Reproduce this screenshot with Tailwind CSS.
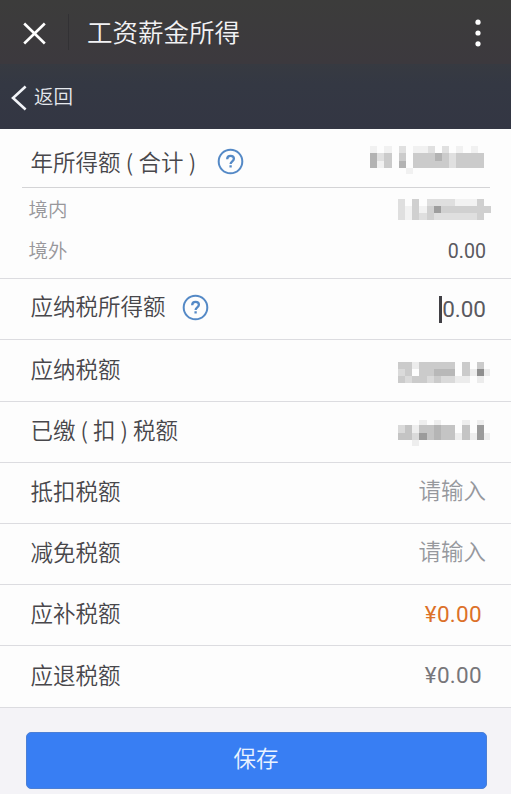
<!DOCTYPE html>
<html lang="zh-CN">
<head>
<meta charset="utf-8">
<title>工资薪金所得</title>
<script src="https://cdn.jsdelivr.net/npm/@tailwindcss/browser@4"></script>
</head>
<body class="w-[511px] h-[794px] overflow-hidden bg-[#f4f3f7] font-[Roboto,'Noto_Sans_CJK_SC',sans-serif] text-[#48474b]">
<header class="h-16 flex items-center bg-linear-to-b from-[#3c3c3b] to-[#3c393e] text-[#f2f2f4]">
  <svg class="ml-[23px] mt-[2px] size-[23px]" viewBox="0 0 23 23" fill="none" stroke="#fff" stroke-width="2.6"><path d="M1.2 1.5 21.8 21.5M21.8 1.5 1.2 21.5"/></svg>
  <div class="ml-[22px] w-px h-9 bg-[#323134]"></div>
  <h1 class="ml-[18px] -mt-[2px] text-[25.5px] leading-8 font-['Noto_Sans_CJK_SC',sans-serif] font-[350]">工资薪金所得</h1>
  <svg class="ml-auto mr-[30px] mt-[2px] w-[6px] h-7" viewBox="0 0 6 28" fill="#fff"><circle cx="3" cy="3.2" r="2.6"/><circle cx="3" cy="14" r="2.6"/><circle cx="3" cy="24.8" r="2.6"/></svg>
</header>
<nav class="h-[65px] flex items-center bg-linear-to-b from-[#373a41] via-[#343843] via-30% to-[#333643] text-[#e6e9ee]">
  <svg class="ml-[11px] mt-[2px] w-4 h-[26px]" viewBox="0 0 16 26" fill="none" stroke="#f2f4f8" stroke-width="2.6"><path d="M14.6 1.5 2 13 14.6 24.5"/></svg>
  <span class="ml-[7px] mt-[2px] text-[19.5px] leading-6 font-[350]">返回</span>
</nav>
<main class="bg-[#fdfdfd] text-[22.5px] font-[350]">
  <section class="h-[150px] border-b border-[#dcdce0]">
    <div class="ml-[22px] mr-[21px] h-[58.5px] pl-[8.5px] border-b border-[#d4d4d6] flex items-center">
      <span class="mt-[8px] leading-7">年所得额<span class="inline-block w-[18px] text-center font-['Noto_Sans_CJK_SC',sans-serif]">(</span>合计<span class="inline-block w-[18px] text-center font-['Noto_Sans_CJK_SC',sans-serif]">)</span></span>
      <svg class="ml-[15px] mt-[8px] size-[27px]" viewBox="0 0 27 27" fill="none" stroke="#5489c6" stroke-width="2"><circle cx="13.5" cy="13.5" r="11.8"/><path stroke-width="2.3" d="M10.2 11.2c0-2.2 1.4-3.3 3.4-3.3s3.3 1.2 3.3 2.9c0 2.5-3.3 2.6-3.3 5.2M13.6 17.3v2.2"/></svg>
      <svg class="ml-auto mr-[5px] mt-[5px] w-[115px] h-[29px]" viewBox="0 0 16 4" preserveAspectRatio="none" shape-rendering="crispEdges">
        <path fill="#f1f1f1" d="M0 0h1v1H0zM2 0h1v1H2zM6 0h2v1H6zM12 0h1v1h-1zM14 0h1v1h-1zM1 2h1v1H1zM5 3h1v.8H5z"/>
        <path fill="#e0e0e0" d="M4 0h1v1H4zM8 0h1v1H8zM10 0h1v1h-1zM11 1h1v2h-1zM1 1h1v1H1z"/>
        <path fill="#cbcbcb" d="M2 1h1v2H2zM4 1h1v1H4zM6 1h5v2H6zM12 1h3.9v2H12z"/>
        <path fill="#b3b3b3" d="M0 1h1v2H0zM4 2h1v1H4zM9 1h1v1H9z"/>
      </svg>
    </div>
    <div class="h-[42px] pl-[28.5px] pr-[20px] mt-[2px] flex items-center justify-between text-[19.5px] text-[#98979b]">
      <span class="mt-px">境内</span>
      <svg class="-mt-[3px] w-[93px] h-[21px]" viewBox="0 0 13 3" preserveAspectRatio="none" shape-rendering="crispEdges">
        <path fill="#f2f2f2" d="M1 1h1v2H1zM8 0h3v1H8zM3 1h1v1H3z"/>
        <path fill="#dfdfdf" d="M0 0h1v3H0zM4 0h4v1H4zM5 2h6v1H5zM3 2h1v1H3z"/>
        <path fill="#d0d0d0" d="M2 0h1v3H2zM4 1h1v2H4zM6 1h7v1H6zM11 0h1v3h-1z"/>
        <path fill="#9e9e9e" d="M5 1h1v1H5z"/>
      </svg>
    </div>
    <div class="h-10 pl-[28.5px] pr-[25px] flex items-center justify-between text-[19.5px] text-[#98979b]">
      <span class="mt-px">境外</span><span class="mt-px text-[19.6px] font-normal text-[#5a595f]">0.00</span>
    </div>
  </section>
  <div class="h-[61px] pl-[30.5px] pr-[25px] border-b border-[#dcdce0] flex items-center">
    <span class="-mt-[2px]">应纳税所得额</span>
    <svg class="ml-[16px] -mt-[3px] size-[27px]" viewBox="0 0 27 27" fill="none" stroke="#5489c6" stroke-width="2"><circle cx="13.5" cy="13.5" r="11.8"/><path stroke-width="2.3" d="M10.2 11.2c0-2.2 1.4-3.3 3.4-3.3s3.3 1.2 3.3 2.9c0 2.5-3.3 2.6-3.3 5.2M13.6 17.3v2.2"/></svg>
    <span class="ml-auto mt-px w-[3px] h-[27px] bg-[#414045]"></span>
    <span class="mt-[2px] font-normal text-[#5a595f]">0.00</span>
  </div>
  <div class="h-[62px] pl-[30.5px] pr-[20px] border-b border-[#dcdce0] flex items-center justify-between">
    <span>应纳税额</span>
    <svg class="mt-[4px] w-[93px] h-[21px]" viewBox="0 0 13 3" preserveAspectRatio="none" shape-rendering="crispEdges">
      <path fill="#ececec" d="M2 0h1v1H2zM8 2h2v1H8zM11 2h1v1h-1zM10 1h1v1h-1zM12 1h.8v1H12z"/>
      <path fill="#dadada" d="M0 1h1v1H0zM1 2h1v1H1zM4 2h1v1H4zM6 2h2v1H6z"/>
      <path fill="#cbcbcb" d="M0 0h2v1H0zM3 0h5v1H3zM1 1h1v1H1zM3 1h2v1H3zM0 2h1v1H0zM2 2h2v1H2zM5 2h1v1H5zM9 0h1v2H9zM11 0h1v1h-1z"/>
      <path fill="#b8b8b8" d="M5 1h3v1H5z"/><path fill="#8f8f8f" d="M11 1h1v1h-1z"/>
    </svg>
  </div>
  <div class="h-[61px] pl-[30.5px] pr-[20px] border-b border-[#dcdce0] flex items-center justify-between">
    <span class="-mt-[2px]">已缴<span class="inline-block w-[17.5px] text-center font-['Noto_Sans_CJK_SC',sans-serif]">(</span>扣<span class="inline-block w-[17.5px] text-center font-['Noto_Sans_CJK_SC',sans-serif]">)</span>税额</span>
    <svg class="mt-px w-[93px] h-[29px]" viewBox="0 0 13 4" preserveAspectRatio="none" shape-rendering="crispEdges">
      <path fill="#eee" d="M3 .3h1V1H3zM5 .3h1V1H5zM9 .3h1V1H9zM11 .3h1V1h-1zM2 1h1v1H2zM10 2h1v1h-1zM12 2h.8v1H12zM2 3h1v.9H2zM8 2h1v1H8z"/>
      <path fill="#dadada" d="M0 1h1v1H0zM2 2h1v1H2z"/>
      <path fill="#c4c4c4" d="M1 1h1v2H1zM0 2h1v1H0zM3 1h2v1H3zM4 2h1v1H4zM6 1h2v2H6zM9 1h1v2H9z"/>
      <path fill="#b5b5b5" d="M5 1h1v2H5z"/><path fill="#9b9b9b" d="M3 2h1v1H3zM11 1h1v2h-1z"/>
    </svg>
  </div>
  <div class="h-[61px] pl-[30.5px] pr-[25px] border-b border-[#dcdce0] flex items-center justify-between">
    <span class="-mt-px">抵扣税额</span><span class="-mt-[3px] text-[#96989d]">请输入</span>
  </div>
  <div class="h-[61px] pl-[30.5px] pr-[25px] border-b border-[#dcdce0] flex items-center justify-between">
    <span class="-mt-px">减免税额</span><span class="-mt-[3px] text-[#96989d]">请输入</span>
  </div>
  <div class="h-[61px] pl-[30.5px] pr-[29px] border-b border-[#dcdce0] flex items-center justify-between">
    <span>应补税额</span><span class="font-normal tracking-[0.3px] text-[#dc7129]">¥0.00</span>
  </div>
  <div class="h-[62px] pl-[30.5px] pr-[29px] border-b border-[#dcdce0] flex items-center justify-between">
    <span>应退税额</span><span class="-mt-px font-normal tracking-[0.3px] text-[#77767a]">¥0.00</span>
  </div>
</main>
<button class="block mt-[23.5px] ml-[25.5px] w-[461px] h-[57px] rounded-[5px] bg-[#387ef3] border border-[#4b7fd6] text-[#eaf3ff] text-[22.5px] font-[350] leading-8 pb-[2px]">保存</button>
</body>
</html>
